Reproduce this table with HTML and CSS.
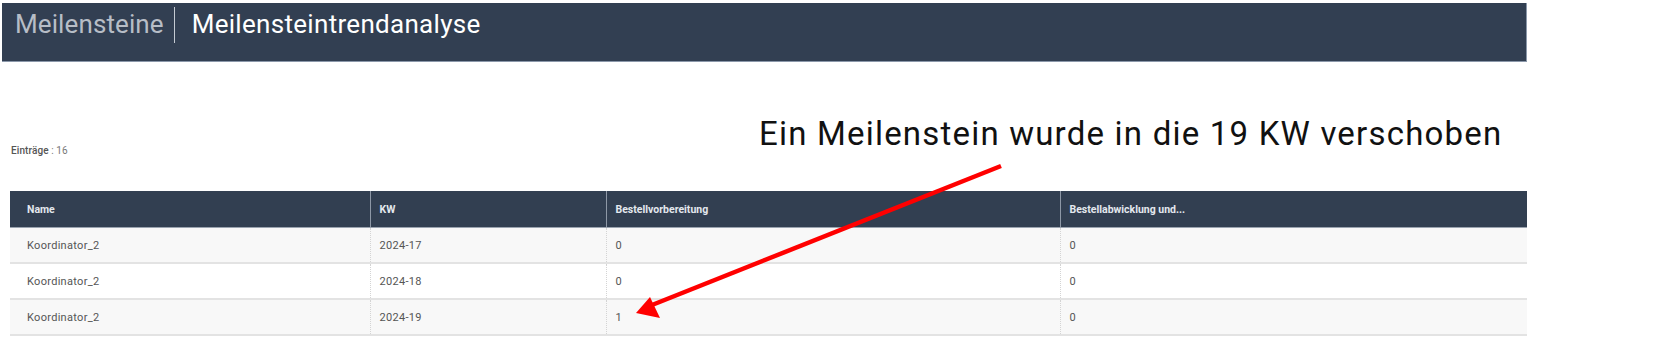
FILE: index.html
```html
<!DOCTYPE html>
<html lang="de">
<head>
<meta charset="utf-8">
<title>Meilensteintrendanalyse</title>
<link rel="stylesheet" href="styles.css">
</head>
<body>
<div class="page">
  <header class="topbar">
    <span class="crumb">Meilensteine</span>
    <span class="sep"></span>
    <span class="title">Meilensteintrendanalyse</span>
  </header>

  <section class="content">
    <div class="count"><span class="count-label">Einträge</span> : 16</div>
    <table class="grid">
      <colgroup>
        <col class="c-name"><col class="c-kw"><col class="c-bv"><col class="c-ba">
      </colgroup>
      <thead>
        <tr><th class="first">Name</th><th>KW</th><th>Bestellvorbereitung</th><th>Bestellabwicklung und...</th></tr>
      </thead>
      <tbody>
        <tr class="odd"><td class="first">Koordinator_2</td><td>2024-17</td><td>0</td><td>0</td></tr>
        <tr><td class="first">Koordinator_2</td><td>2024-18</td><td>0</td><td>0</td></tr>
        <tr class="odd"><td class="first">Koordinator_2</td><td>2024-19</td><td>1</td><td>0</td></tr>
      </tbody>
    </table>
  </section>

  <div class="note">Ein Meilenstein wurde in die 19 KW verschoben</div>
  <svg class="arrow" width="1680" height="342" viewBox="0 0 1680 342">
    <line x1="1001" y1="166" x2="652" y2="305" stroke="#ff0000" stroke-width="4.5"/>
    <polygon points="636,313 650,297 660,318" fill="#ff0000"/>
  </svg>
</div>
</body>
</html>
```
FILE: styles.css
```css
html, body {
  margin: 0;
  padding: 0;
  background: #ffffff;
}
.page {
  position: relative;
  width: 1680px;
  height: 342px;
  overflow: hidden;
  font-family: Roboto, "Liberation Sans", sans-serif;
}
.topbar {
  margin: 3px 153px 0 2px;
  height: 59px;
  box-sizing: border-box;
  background: #323f52;
  border-right: 1px solid #8b98aa;
  border-bottom: 1px solid #8b98aa;
  display: flex;
  align-items: flex-start;
  padding: 6px 0 0 13px;
}
.crumb, .title {
  font-size: 26px;
  line-height: 30px;
  letter-spacing: 0.3px;
}
.crumb { color: #b7bdc6; letter-spacing: 0.1px; }
.title { color: #ffffff; }
.sep {
  width: 1px;
  height: 36px;
  background: #c4cad2;
  margin: -2px 17px 0 10px;
}
.content {
  padding: 83px 153px 0 10px;
}
.count {
  font-size: 10px;
  line-height: 12px;
  color: #777;
  margin-left: 1px;
  letter-spacing: 0.1px;
}
.count-label {
  color: #555;
  font-weight: 500;
}
.grid {
  margin-top: 34px;
  width: 1517px;
  table-layout: fixed;
  border-collapse: collapse;
  font-size: 11px;
}
.c-name { width: 360px; }
.c-kw { width: 236px; }
.c-bv { width: 454px; }
.c-ba { width: 467px; }
.grid th {
  background: #323f51;
  color: #e4e8ee;
  font-weight: 700;
  font-size: 10.5px;
  text-align: left;
  height: 36px;
  padding: 0 9px;
  border-left: 1px solid #8e98a6;
  border-bottom: 1px solid #9aa3af;
}
.grid th.first { border-left: none; }
.grid td {
  height: 34px;
  padding: 0 9px;
  color: #555;
  letter-spacing: 0.3px;
  border-left: 1px dotted #d4d4d4;
  border-bottom: 2px solid #e3e3e3;
}
.grid td.first { border-left: none; }
.grid .first { padding-left: 17px; }
.grid tr.odd td { background: #f8f8f8; }
.note {
  position: absolute;
  left: 759px;
  top: 114px;
  font-size: 33px;
  line-height: 40px;
  letter-spacing: 1.2px;
  color: #111;
  white-space: nowrap;
}
.arrow {
  position: absolute;
  left: 0;
  top: 0;
  pointer-events: none;
}
```
